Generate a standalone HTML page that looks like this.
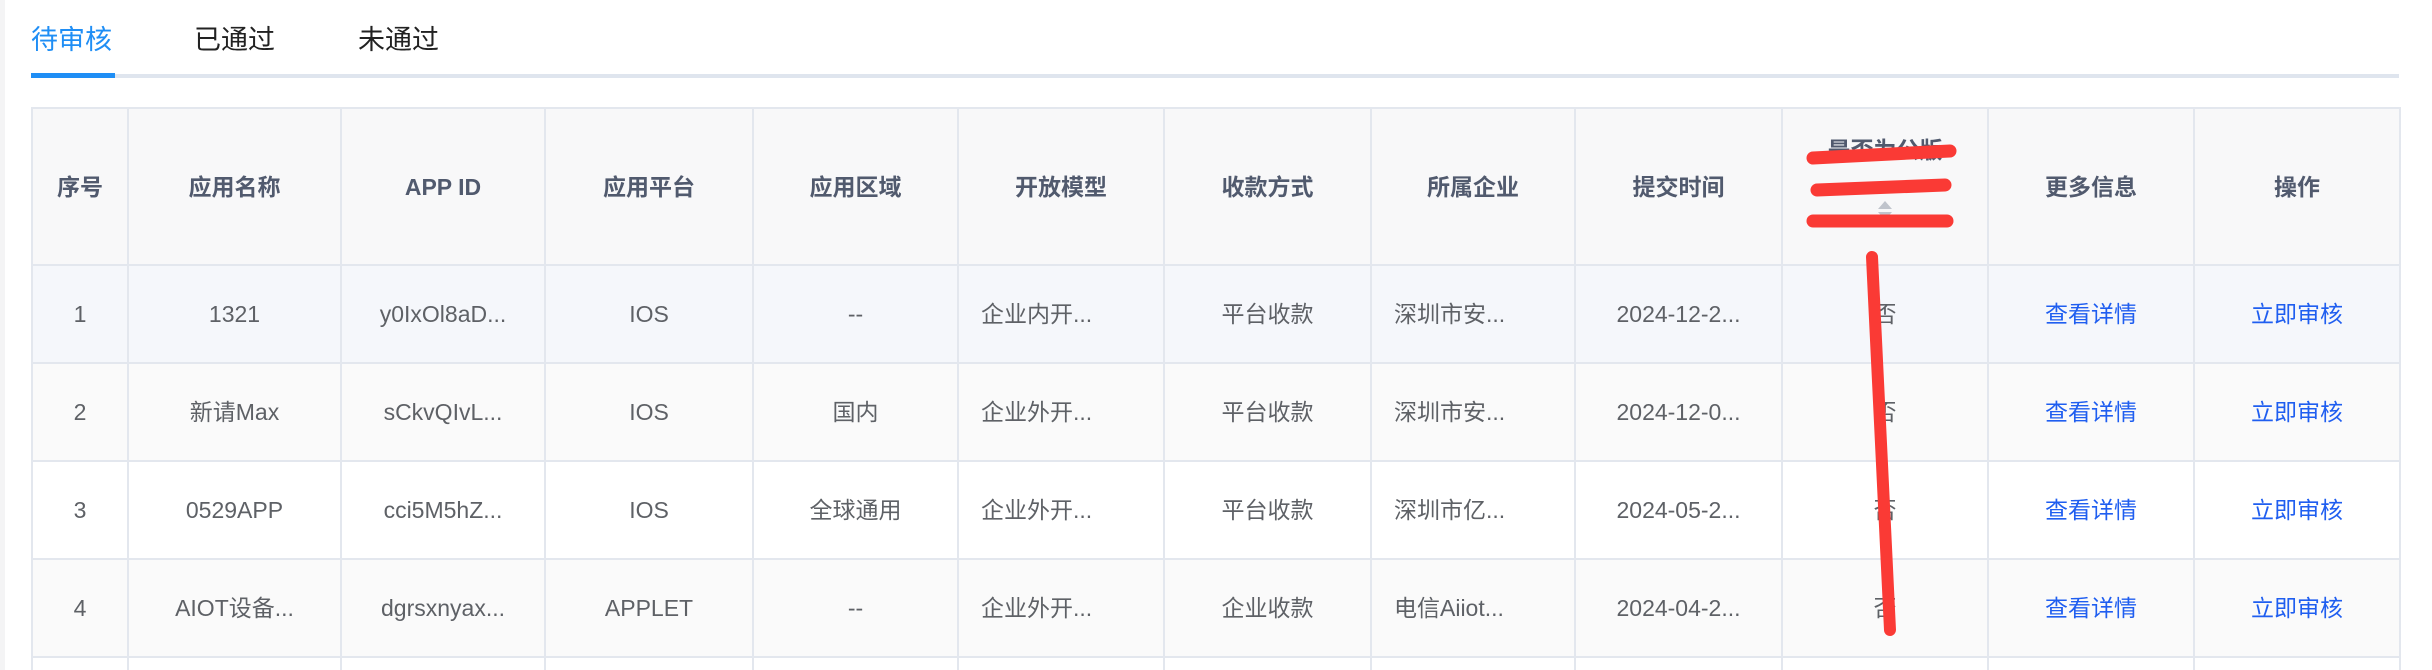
<!DOCTYPE html>
<html style="height:670px;overflow:hidden"><head><meta charset="utf-8"><style>
body{margin:0;width:2432px;height:670px;background:#fff;position:relative;overflow:hidden;font-family:"Liberation Sans","Noto Sans CJK SC",sans-serif;}
.tab{position:absolute;top:22px;font-size:27px;color:#222;line-height:36px}
.wrap{position:absolute;left:31px;top:107px;width:2370px;height:563px;overflow:hidden}
table{border-collapse:collapse;table-layout:fixed}
td,th{border:2px solid #e3e7ee;text-align:center;font-size:23px;line-height:30px;color:#5e6166;white-space:nowrap;overflow:hidden;padding:0;box-sizing:border-box}
th{height:157px;background:#f8f8f9;color:#515a6e;font-weight:bold;position:relative}
td{height:98px}
tr.last td{height:14px;border-bottom:none}
a{color:#1f5ef0;text-decoration:none}
</style></head><body>
<div style="position:absolute;left:0;top:0;width:5px;height:670px;background:#f4f4f5"></div>
<div class="tab" style="left:31px;color:#1f8ef5">待审核</div>
<div class="tab" style="left:194px">已通过</div>
<div class="tab" style="left:358px">未通过</div>
<div style="position:absolute;left:31px;top:74px;width:2368px;height:4px;background:#dfe5ee"></div>
<div style="position:absolute;left:31px;top:73px;width:84px;height:5px;background:#1f8ef5"></div>
<div class="wrap"><table>
<colgroup><col style="width:96px"><col style="width:213px"><col style="width:204px"><col style="width:208px"><col style="width:205px"><col style="width:206px"><col style="width:207px"><col style="width:204px"><col style="width:207px"><col style="width:206px"><col style="width:206px"><col style="width:206px"></colgroup>
<tr><th>序号</th><th>应用名称</th><th>APP ID</th><th>应用平台</th><th>应用区域</th><th>开放模型</th><th>收款方式</th><th>所属企业</th><th>提交时间</th><th><div style="position:absolute;left:0;right:0;top:26px">是否为公版</div><div style="position:absolute;left:95px;top:92px;width:0;height:0;border-left:7px solid transparent;border-right:7px solid transparent;border-bottom:8px solid #c0c4cc"></div><div style="position:absolute;left:95px;top:103px;width:0;height:0;border-left:7px solid transparent;border-right:7px solid transparent;border-top:8px solid #c0c4cc"></div></th><th>更多信息</th><th>操作</th></tr>
<tr style="background:#f5f7fb"><td>1</td><td>1321</td><td>y0IxOl8aD...</td><td>IOS</td><td>--</td><td style="text-align:left;padding-left:22px">企业内开...</td><td>平台收款</td><td style="text-align:left;padding-left:22px">深圳市安...</td><td>2024-12-2...</td><td>否</td><td><a>查看详情</a></td><td><a>立即审核</a></td></tr>
<tr style="background:#fafafa"><td>2</td><td>新请Max</td><td>sCkvQIvL...</td><td>IOS</td><td>国内</td><td style="text-align:left;padding-left:22px">企业外开...</td><td>平台收款</td><td style="text-align:left;padding-left:22px">深圳市安...</td><td>2024-12-0...</td><td>否</td><td><a>查看详情</a></td><td><a>立即审核</a></td></tr>
<tr><td>3</td><td>0529APP</td><td>cci5M5hZ...</td><td>IOS</td><td>全球通用</td><td style="text-align:left;padding-left:22px">企业外开...</td><td>平台收款</td><td style="text-align:left;padding-left:22px">深圳市亿...</td><td>2024-05-2...</td><td>否</td><td><a>查看详情</a></td><td><a>立即审核</a></td></tr>
<tr style="background:#fafafa"><td>4</td><td>AIOT设备...</td><td>dgrsxnyax...</td><td>APPLET</td><td>--</td><td style="text-align:left;padding-left:22px">企业外开...</td><td>企业收款</td><td style="text-align:left;padding-left:22px">电信Aiiot...</td><td>2024-04-2...</td><td>否</td><td><a>查看详情</a></td><td><a>立即审核</a></td></tr>
<tr class="last"><td></td><td></td><td></td><td></td><td></td><td></td><td></td><td></td><td></td><td></td><td></td><td></td></tr>
</table></div>
<svg width="2432" height="670" style="position:absolute;left:0;top:0" fill="none" stroke="#fa3a35" stroke-linecap="round" stroke-width="13">
<line x1="1813" y1="158" x2="1950" y2="151"/>
<line x1="1817" y1="190" x2="1945" y2="185"/>
<line x1="1813" y1="221" x2="1947" y2="221"/>
<line x1="1872" y1="257" x2="1890" y2="630" stroke-width="12"/>
</svg>
</body></html>
